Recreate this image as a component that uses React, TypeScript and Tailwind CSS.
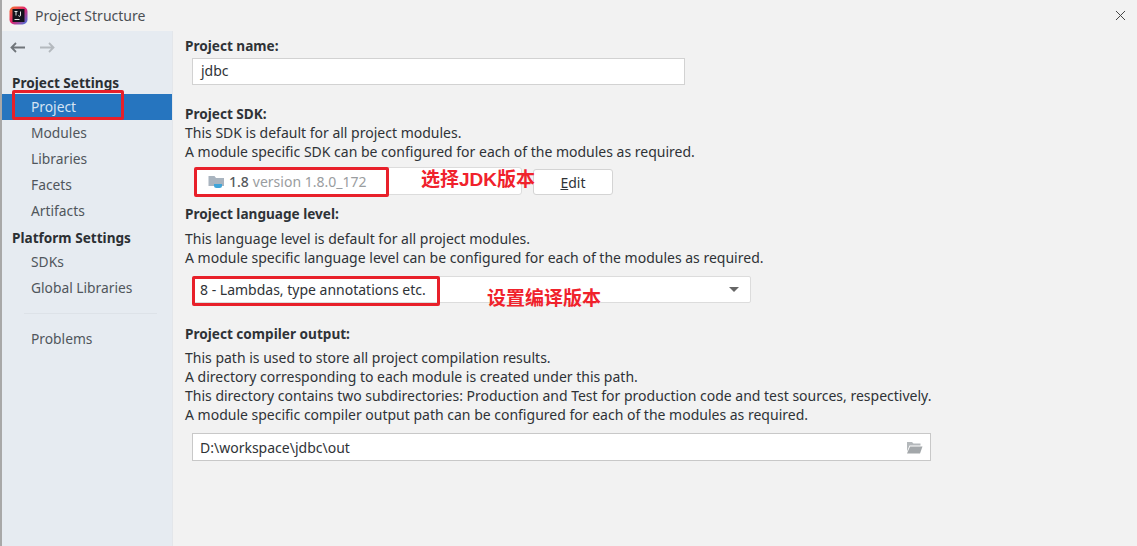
import { X } from 'lucide-react';

const font = { fontFamily: '"Noto Sans", "Noto Sans CJK SC", sans-serif' };
const noteFont = { fontFamily: '"Liberation Sans", "Noto Sans CJK SC", sans-serif' };

function NavItem({ label, className = '' }: { label: string; className?: string }) {
  return <div className={`h-[26px] pl-[29px] text-[13.8px] leading-[26px] text-[#50565c] ${className}`}>{label}</div>;
}

function NavHeader({ label }: { label: string }) {
  return <div className="h-[25px] pl-[10px] text-[13.6px] leading-[27px] font-bold text-[#2b2f33]">{label}</div>;
}

function Line({ children, className = '' }: { children: React.ReactNode; className?: string }) {
  return <div className={`h-[19px] leading-[19px] whitespace-nowrap ${className}`}>{children}</div>;
}

function Heading({ children, className = '' }: { children: React.ReactNode; className?: string }) {
  return <Line className={`text-[13.6px] font-bold ${className}`}>{children}</Line>;
}

function RedBox({ className }: { className: string }) {
  return <div className={`absolute border-[3px] border-[#e8202a] rounded-[2px] ${className}`} />;
}

function AppLogo() {
  return (
    <svg width="19" height="19" viewBox="0 0 19 19">
      <defs>
        <linearGradient id="lg" x1="0" y1="0" x2="1" y2="1">
          <stop offset="0" stopColor="#f9782b" />
          <stop offset="0.5" stopColor="#e0246f" />
          <stop offset="1" stopColor="#3a7be8" />
        </linearGradient>
      </defs>
      <rect x="0.500" y="0.500" width="18" height="18" rx="5" fill="url(#lg)" />
      <rect x="3.500" y="3" width="12" height="13" fill="#14141c" />
      <rect x="5.500" y="13" width="5" height="1" fill="#e8e8e8" />
      <path d="M5.500 5.500h3M7 5.500v4M11.500 5.500v3.500a1 1 0 0 1-2 0.500" stroke="#e8e8e8" strokeWidth="1" fill="none" />
    </svg>
  );
}

function NavArrow({ dir, className }: { dir: 'left' | 'right'; className: string }) {
  return (
    <svg width="15" height="11" viewBox="0 0 15 11" fill="none" stroke="currentColor" strokeWidth="1.8" className={className}>
      {dir === 'left' ? <path d="M15 5.500H1.500M6 1L1.500 5.500L6 10" /> : <path d="M0 5.500h13.500M9 1l4.500 4.500L9 10" />}
    </svg>
  );
}

export default function App() {
  return (
    <div className="relative w-[1137px] h-[546px] overflow-hidden bg-[#f2f2f2] text-[14px] text-[#2f3337]" style={font}>
      {/* title bar */}
      <div className="flex h-[31px] items-center border-l-2 border-[#a8a8a8] pl-[7px] pr-[8px]">
        <AppLogo />
        <span className="ml-[7px] text-[#4b4f54]">Project Structure</span>
        <X size={17} strokeWidth={1.4} className="ml-auto text-[#444]" />
      </div>

      <div className="flex h-[515px]">
        {/* sidebar */}
        <div className="w-[173px] border-l-2 border-[#a8a8a8] border-r border-r-[#e3e6ea] bg-[#e6ebf1]">
          <div className="flex h-[32px] items-center gap-[15px] pl-[8px]">
            <NavArrow dir="left" className="text-[#70757a]" />
            <NavArrow dir="right" className="text-[#b4b9be]" />
          </div>
          <div className="mt-[6px]">
            <NavHeader label="Project Settings" />
          </div>
          <NavItem label="Project" className="bg-[#2675bf] !text-[#d5e4f3]" />
          <NavItem label="Modules" />
          <NavItem label="Libraries" />
          <NavItem label="Facets" />
          <NavItem label="Artifacts" />
          <NavHeader label="Platform Settings" />
          <NavItem label="SDKs" />
          <NavItem label="Global Libraries" />
          <div className="ml-[22px] mr-[15px] mt-[12px] h-px bg-[#dde2e8]" />
          <div className="mt-[12px]">
            <NavItem label="Problems" />
          </div>
        </div>

        {/* content */}
        <div className="flex-1 pl-[12px] pt-[5px]">
          <Heading>Project name:</Heading>
          <div className="mt-[3px] ml-[7px] h-[27px] w-[493px] border border-[#d2d2d2] bg-white pl-[8px] leading-[24px]">jdbc</div>

          <Heading className="mt-[19px]">Project SDK:</Heading>
          <Line>This SDK is default for all project modules.</Line>
          <Line>A module specific SDK can be configured for each of the modules as required.</Line>

          <div className="mt-[6px] ml-[10px] flex items-end gap-[11px]">
            <div className="flex h-[28px] w-[327px] items-center rounded-[3px] border border-[#dcdcdc] bg-white pl-[12px]">
              <svg width="17" height="17" viewBox="0 0 17 17">
                <path d="M0.500 3h6l1.500 2h8v8h-15.500z" fill="#a9b4bf" />
                <path d="M6 11h8v1.500a2.500 2.500 0 0 1-2.500 2.500h-3a2.500 2.500 0 0 1-2.500-2.500z" fill="#3fa4d8" />
              </svg>
              <span className="ml-[4px] font-medium text-[#55595d]">1.8</span>
              <span className="ml-[4px] text-[#9a9da0]">version 1.8.0_172</span>
            </div>
            <div className="flex h-[26px] w-[80px] items-center justify-center rounded-[3px] border border-[#d4d4d4] bg-white text-[#2f3337]">
              <span><span className="underline">E</span>dit</span>
            </div>
          </div>

          <Heading className="mt-[9px]">Project language level:</Heading>
          <Line className="mt-[6px]">This language level is default for all project modules.</Line>
          <Line>A module specific language level can be configured for each of the modules as required.</Line>

          <div className="mt-[9px] ml-[7px] flex h-[27px] w-[559px] items-center border border-[#dcdcdc] rounded-[2px] bg-white pl-[7px] pr-[11px]">
            <span>8 - Lambdas, type annotations etc.</span>
            <div className="ml-auto h-0 w-0 border-x-[5px] border-t-[5px] border-x-transparent border-t-[#666]" />
          </div>

          <Heading className="mt-[21px]">Project compiler output:</Heading>
          <Line className="mt-[5px]">This path is used to store all project compilation results.</Line>
          <Line>A directory corresponding to each module is created under this path.</Line>
          <Line>This directory contains two subdirectories: Production and Test for production code and test sources, respectively.</Line>
          <Line>A module specific compiler output path can be configured for each of the modules as required.</Line>

          <div className="mt-[9px] ml-[7px] flex h-[28px] w-[739px] items-center border border-[#c8c8c8] bg-white pl-[7px] pr-[7px]">
            <span>D:\workspace\jdbc\out</span>
            <svg width="17" height="15" viewBox="0 0 17 15" className="ml-auto">
              <path d="M1 2h5l1.500 1.500h7v2h-11l-2.500 6z" fill="#b4b8bb" />
              <path d="M4 6.500h12.500l-2.500 7h-13z" fill="#a3a7aa" />
            </svg>
          </div>
        </div>
      </div>

      {/* annotations drawn over the screenshot */}
      <RedBox className="left-[12px] top-[90px] w-[112px] h-[30px]" />
      <RedBox className="left-[194px] top-[167px] w-[195px] h-[30px]" />
      <RedBox className="left-[192px] top-[276px] w-[248px] h-[30px]" />
      <div className="absolute left-[421px] top-[167px] text-[19px] leading-[26px] font-bold text-[#f0222c]" style={noteFont}>选择JDK版本</div>
      <div className="absolute left-[487px] top-[286px] text-[19px] leading-[26px] font-bold text-[#f0222c]" style={noteFont}>设置编译版本</div>
    </div>
  );
}
